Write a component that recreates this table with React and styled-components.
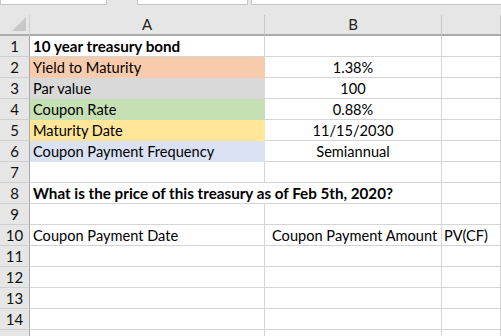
import React from "react";
import styled, { createGlobalStyle } from "styled-components";

const GlobalStyle = createGlobalStyle`
  body {
    margin: 0;
    background: #e6e6e6;
    font-family: Lato, "Open Sans", sans-serif;
  }
`;

const fills = {
  orange: "#f8cbad",
  gray: "#d9d9d9",
  green: "#c6e0b4",
  yellow: "#ffe699",
  blue: "#d9e1f2",
};

const Sheet = styled.div`
  width: 501px;
  height: 336px;
  overflow: hidden;
  background: #e6e6e6;
`;

const TopStrip = styled.div`
  height: 15px;
  display: grid;
  grid-template-columns: 107px 30px 111px 3px 1fr;
  align-items: start;
`;

const TopBox = styled.div`
  height: 4px;
  background: #fff;
  border: 1px solid #c6c6c6;
  border-top: none;
  margin-right: ${(p) => (p.$last ? "-20px" : "0")};
`;

const Grid = styled.div`
  display: grid;
  grid-template-columns: 30px 235px 177px 1fr;
  grid-auto-rows: 21px;
  grid-template-rows: 21px;
  background: #fff;
`;

const Corner = styled.div`
  background: #e6e6e6;
  border-right: 1px solid #d0d0d0;
  border-bottom: 2px solid #ababab;
  position: relative;
  &::after {
    content: "";
    position: absolute;
    right: 3px;
    bottom: 3px;
    border-style: solid;
    border-width: 0 0 14px 14px;
    border-color: transparent transparent #c8c8c8 transparent;
  }
`;

const ColHead = styled.div`
  background: #e6e6e6;
  border-right: 1px solid #c8c8c8;
  border-bottom: 2px solid #ababab;
  display: flex;
  align-items: flex-end;
  justify-content: center;
  padding-bottom: 1px;
  font-size: 15px;
  color: #222;
`;

const RowHead = styled.div`
  background: #e6e6e6;
  border-right: 1px solid #a8a8a8;
  border-bottom: 1px solid #cfcfcf;
  display: flex;
  align-items: center;
  justify-content: center;
  font-size: 15px;
  color: #111;
`;

const lineColor = (p) => (p.$fill ? fills[p.$fill] : "#d4d4d4");

const Cell = styled.div`
  background: ${(p) => (p.$fill ? fills[p.$fill] : "#fff")};
  border-right: 1px solid ${(p) => (p.$over ? "#fff" : lineColor(p))};
  border-bottom: 1px solid ${lineColor};
  display: flex;
  align-items: center;
  justify-content: ${(p) => (p.$center ? "center" : "flex-start")};
  padding: 0 ${(p) => p.$pad ?? 3}px;
  font-size: ${(p) => (p.$bold ? "15.2px" : "14.6px")};
  font-weight: ${(p) => (p.$bold ? 700 : 400)};
  color: #000;
  white-space: nowrap;
  min-width: 0;
  position: relative;
  z-index: ${(p) => (p.$over ? 1 : 0)};
`;

const rows = [
  { a: "10 year treasury bond", bold: true },
  { a: "Yield to Maturity", b: "1.38%", fill: "orange" },
  { a: "Par value", b: "100", fill: "gray" },
  { a: "Coupon Rate", b: "0.88%", fill: "green" },
  { a: "Maturity Date", b: "11/15/2030", fill: "yellow" },
  { a: "Coupon Payment Frequency", b: "Semiannual", fill: "blue" },
  {},
  { a: "What is the price of this treasury as of Feb 5th, 2020?", bold: true, over: true },
  {},
  { a: "Coupon Payment Date", b: "Coupon Payment Amount", c: "PV(CF)", bLeft: true },
  {},
  {},
  {},
  {},
  { blank: true },
];

const App = () => (
  <Sheet>
    <GlobalStyle />
    <TopStrip>
      <TopBox />
      <div />
      <TopBox />
      <div />
      <TopBox $last />
    </TopStrip>
    <Grid>
      <Corner />
      <ColHead>A</ColHead>
      <ColHead>B</ColHead>
      <ColHead />
      {rows.map((r, i) => (
        <React.Fragment key={i}>
          <RowHead>{r.blank ? "" : i + 1}</RowHead>
          <Cell $fill={r.fill} $bold={r.bold} $over={r.over}>
            {r.a}
          </Cell>
          <Cell $center={!r.bLeft} $pad={r.bLeft ? 7 : 3}>
            {r.b}
          </Cell>
          <Cell $pad={2}>{r.c}</Cell>
        </React.Fragment>
      ))}
    </Grid>
  </Sheet>
);

export default App;
